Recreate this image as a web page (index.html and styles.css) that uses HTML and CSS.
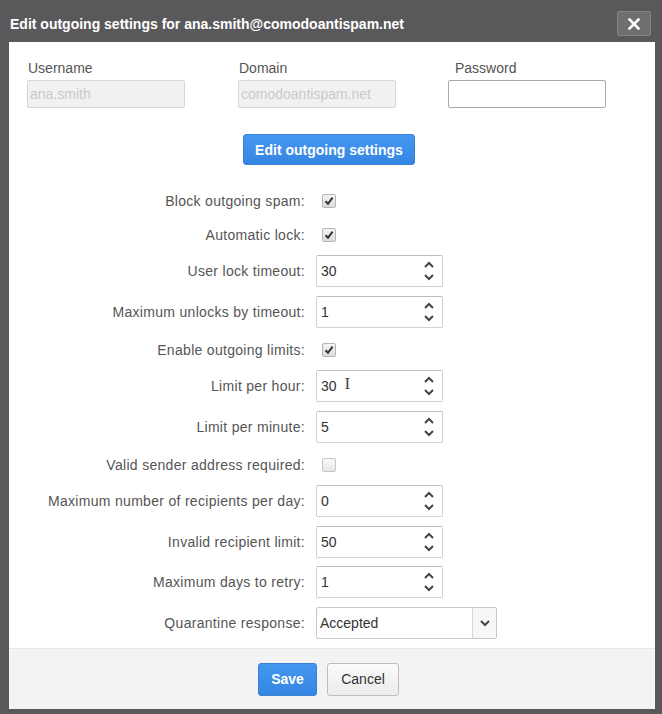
FILE: index.html
```html
<!DOCTYPE html>
<html>
<head>
<meta charset="utf-8">
<link rel="stylesheet" href="styles.css">
</head>
<body>
<div class="dialog">
  <div class="titlebar">
    <span class="title">Edit outgoing settings for ana.smith@comodoantispam.net</span>
    <button class="close" aria-label="Close">
      <svg width="12" height="12" viewBox="0 0 12 12"><path d="M1.5 1.5 L10.5 10.5 M10.5 1.5 L1.5 10.5" stroke="#fff" stroke-width="2.6" stroke-linecap="square"/></svg>
    </button>
  </div>
  <div class="body">
    <div class="creds">
      <div class="field">
        <span class="flabel">Username</span>
        <div class="tbox disabled">ana.smith</div>
      </div>
      <div class="field">
        <span class="flabel">Domain</span>
        <div class="tbox disabled">comodoantispam.net</div>
      </div>
      <div class="field">
        <span class="flabel flabel-shift">Password</span>
        <div class="tbox pw"></div>
      </div>
    </div>
    <div class="action">
      <button class="btn btn-primary btn-wide">Edit outgoing settings</button>
    </div>
    <div class="form">
      <div class="row row-check"><span class="lbl">Block outgoing spam:</span><span class="cb"><svg width="10" height="10" viewBox="0 0 10 10"><path d="M1.5 5.2 L4 7.8 L8.6 1.6" fill="none" stroke="#333" stroke-width="2"/></svg></span></div>
      <div class="row row-check"><span class="lbl">Automatic lock:</span><span class="cb"><svg width="10" height="10" viewBox="0 0 10 10"><path d="M1.5 5.2 L4 7.8 L8.6 1.6" fill="none" stroke="#333" stroke-width="2"/></svg></span></div>
      <div class="row row-input"><span class="lbl">User lock timeout:</span><div class="spin"><span class="val">30</span><span class="arrows"><svg width="12" height="22" viewBox="0 0 12 22"><path d="M2 7 L6 3 L10 7 M2 15 L6 19 L10 15" fill="none" stroke="#444" stroke-width="2"/></svg></span></div></div>
      <div class="row row-input"><span class="lbl">Maximum unlocks by timeout:</span><div class="spin"><span class="val">1</span><span class="arrows"><svg width="12" height="22" viewBox="0 0 12 22"><path d="M2 7 L6 3 L10 7 M2 15 L6 19 L10 15" fill="none" stroke="#444" stroke-width="2"/></svg></span></div></div>
      <div class="row row-check"><span class="lbl">Enable outgoing limits:</span><span class="cb"><svg width="10" height="10" viewBox="0 0 10 10"><path d="M1.5 5.2 L4 7.8 L8.6 1.6" fill="none" stroke="#333" stroke-width="2"/></svg></span></div>
      <div class="row row-input"><span class="lbl">Limit per hour:</span><div class="spin"><span class="val">30</span><span class="caret">I</span><span class="arrows"><svg width="12" height="22" viewBox="0 0 12 22"><path d="M2 7 L6 3 L10 7 M2 15 L6 19 L10 15" fill="none" stroke="#444" stroke-width="2"/></svg></span></div></div>
      <div class="row row-input"><span class="lbl">Limit per minute:</span><div class="spin"><span class="val">5</span><span class="arrows"><svg width="12" height="22" viewBox="0 0 12 22"><path d="M2 7 L6 3 L10 7 M2 15 L6 19 L10 15" fill="none" stroke="#444" stroke-width="2"/></svg></span></div></div>
      <div class="row row-check"><span class="lbl">Valid sender address required:</span><span class="cb cb-off"></span></div>
      <div class="row row-input"><span class="lbl">Maximum number of recipients per day:</span><div class="spin"><span class="val">0</span><span class="arrows"><svg width="12" height="22" viewBox="0 0 12 22"><path d="M2 7 L6 3 L10 7 M2 15 L6 19 L10 15" fill="none" stroke="#444" stroke-width="2"/></svg></span></div></div>
      <div class="row row-input"><span class="lbl">Invalid recipient limit:</span><div class="spin"><span class="val">50</span><span class="arrows"><svg width="12" height="22" viewBox="0 0 12 22"><path d="M2 7 L6 3 L10 7 M2 15 L6 19 L10 15" fill="none" stroke="#444" stroke-width="2"/></svg></span></div></div>
      <div class="row row-input"><span class="lbl">Maximum days to retry:</span><div class="spin"><span class="val">1</span><span class="arrows"><svg width="12" height="22" viewBox="0 0 12 22"><path d="M2 7 L6 3 L10 7 M2 15 L6 19 L10 15" fill="none" stroke="#444" stroke-width="2"/></svg></span></div></div>
      <div class="row row-input"><span class="lbl">Quarantine response:</span><div class="select"><span class="val">Accepted</span><span class="drop"><svg width="12" height="10" viewBox="0 0 12 10"><path d="M2 3 L6 7 L10 3" fill="none" stroke="#444" stroke-width="2"/></svg></span></div></div>
    </div>
  </div>
  <div class="footer">
    <button class="btn btn-primary btn-save">Save</button>
    <button class="btn btn-default">Cancel</button>
  </div>
</div>
</body>
</html>
```

FILE: styles.css
```css
html, body {
  margin: 0;
  padding: 0;
}
body {
  background: #58585a;
  font-family: "Liberation Sans", Arial, sans-serif;
  font-size: 14px;
}
.dialog {
  width: 662px;
  height: 714px;
  box-sizing: border-box;
  background: #59595b;
  padding: 0 7px 5px 9px;
  display: flex;
  flex-direction: column;
}
.titlebar {
  height: 42px;
  box-sizing: border-box;
  padding: 5px 4px 0 1px;
  display: flex;
  align-items: center;
  justify-content: space-between;
  flex: none;
}
.title {
  color: #fff;
  font-weight: bold;
  font-size: 14px;
}
.close {
  width: 34px;
  height: 25px;
  box-sizing: border-box;
  background: #6f6f71;
  border: 1px solid #858587;
  border-radius: 2px;
  padding: 0;
  display: flex;
  align-items: center;
  justify-content: center;
}
.body {
  flex: 1;
  background: #fff;
  padding-top: 18px;
}
.creds {
  display: grid;
  grid-template-columns: 211px 210px auto;
  padding-left: 18px;
}
.field {
  display: flex;
  flex-direction: column;
  gap: 4px;
}
.flabel {
  color: #555;
  line-height: 16px;
  padding-left: 1px;
}
.flabel-shift {
  padding-left: 7px;
}
.tbox {
  width: 158px;
  height: 28px;
  box-sizing: border-box;
  border: 1px solid #d6d6d6;
  border-radius: 2px;
  line-height: 26px;
  padding-left: 2px;
  color: #cacaca;
}
.tbox.disabled {
  background: #f1f1f1;
}
.tbox.pw {
  border-color: #a9a9a9;
  background: #fff;
}
.action {
  display: flex;
  justify-content: center;
  padding-right: 6px;
  margin-top: 26px;
}
.btn {
  font-family: "Liberation Sans", Arial, sans-serif;
  font-size: 14px;
  border-radius: 3px;
  box-sizing: border-box;
  padding: 0;
}
.btn-primary {
  color: #fff;
  font-weight: bold;
  background: linear-gradient(#4598ef, #3585e3);
  border: 1px solid #3a80d2;
}
.btn-wide {
  width: 172px;
  height: 31px;
}
.form {
  margin-top: 19px;
  display: flex;
  flex-direction: column;
}
.row {
  display: flex;
  align-items: center;
}
.row-check {
  height: 34px;
}
.row-input {
  padding: 3px 0 5.5px;
}
.lbl {
  width: 296px;
  text-align: right;
  color: #555;
  letter-spacing: 0.3px;
  margin-right: 11px;
  flex: none;
}
.cb {
  width: 14px;
  height: 14px;
  box-sizing: border-box;
  margin-left: 6px;
  border: 1px solid #b5b5b5;
  border-radius: 2px;
  background: linear-gradient(#f4f4f4, #dcdcdc);
  display: flex;
  align-items: center;
  justify-content: center;
}
.cb-off {
  background: linear-gradient(#fafafa, #e6e6e6);
  border-color: #c6c6c6;
}
.spin {
  width: 127px;
  height: 32px;
  box-sizing: border-box;
  border: 1px solid #d0d0d0;
  border-top-color: #bdbdbd;
  border-radius: 2px;
  display: flex;
  align-items: center;
  color: #333;
}
.val {
  padding-left: 4px;
}
.caret {
  font-family: "Liberation Serif", serif;
  font-size: 17px;
  color: #444;
  margin-left: 8px;
  margin-top: -4px;
}
.arrows {
  margin-left: auto;
  width: 24px;
  display: flex;
  justify-content: center;
  padding-right: 1px;
}
.select {
  width: 181px;
  height: 32px;
  box-sizing: border-box;
  border: 1px solid #c8c8c8;
  border-radius: 2px;
  display: flex;
  align-items: center;
  color: #333;
}
.select .val {
  padding-left: 3px;
  flex: 1;
}
.drop {
  width: 23px;
  height: 100%;
  border-left: 1px solid #d6d6d6;
  background: #f7f7f7;
  display: flex;
  align-items: center;
  justify-content: center;
}
.footer {
  height: 61px;
  flex: none;
  background: #f3f3f5;
  border-top: 1px solid #e8e8ea;
  box-sizing: border-box;
  display: flex;
  align-items: center;
  justify-content: center;
  gap: 10px;
  padding-right: 7px;
}
.btn-save {
  width: 59px;
  height: 33px;
}
.btn-default {
  width: 72px;
  height: 33px;
  background: linear-gradient(#fafafa, #ececec);
  border: 1px solid #bdbdbd;
  color: #333;
}
```
